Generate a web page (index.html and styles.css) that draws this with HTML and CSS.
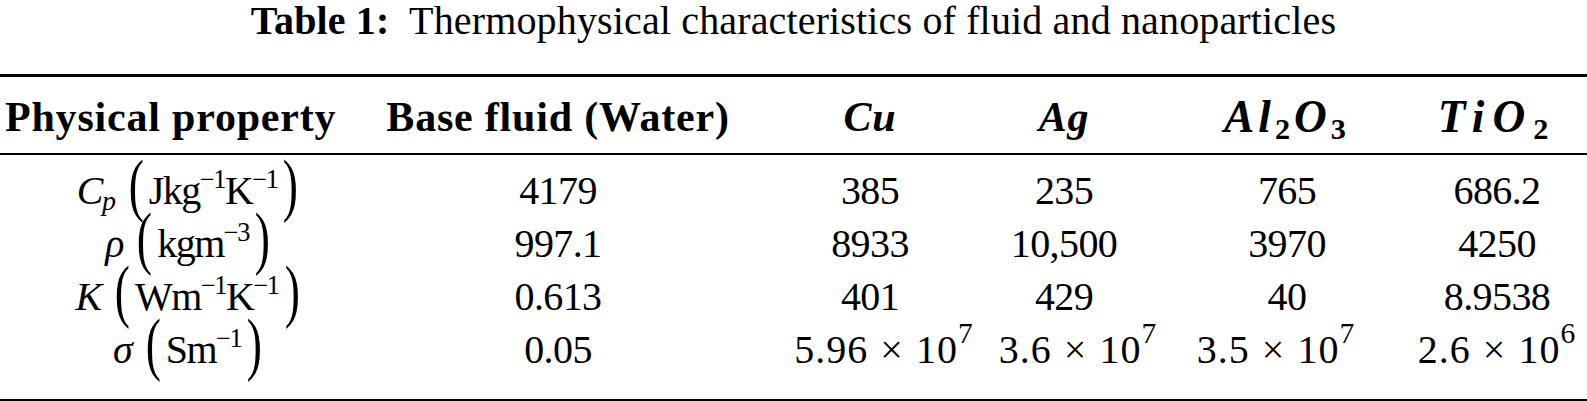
FILE: index.html
```html
<!DOCTYPE html>
<html>
  <head>
    <title>Table 1</title>
    <link rel="stylesheet" href="styles.css">
  </head>
  <body>
    <div class="page">
      <div class="caption">
        <b>Table 1:</b>&nbsp; Thermophysical characteristics of fluid and nanoparticles
      </div>

      <div class="table">
        <div class="row head">
          <div class="cell left">Physical property</div>
          <div class="cell">Base fluid (Water)</div>
          <div class="cell"><i>Cu</i></div>
          <div class="cell"><i>Ag</i></div>
          <div class="cell chem"><i>Al</i><sub>2</sub><i>O</i><sub>3</sub></div>
          <div class="cell chem wide"><i>TiO</i><sub>2</sub></div>
        </div>

        <div class="body">
          <div class="row">
            <div class="cell unit">
              <i>C</i><sub class="var">p</sub>
              <span class="paren">(</span>Jkg<sup>&minus;1</sup>K<sup>&minus;1</sup><span class="paren">)</span>
            </div>
            <div class="cell">4179</div>
            <div class="cell">385</div>
            <div class="cell">235</div>
            <div class="cell">765</div>
            <div class="cell">686.2</div>
          </div>
          <div class="row">
            <div class="cell unit">
              <i>&rho;</i>
              <span class="paren">(</span>kgm<sup>&minus;3</sup><span class="paren">)</span>
            </div>
            <div class="cell">997.1</div>
            <div class="cell">8933</div>
            <div class="cell">10,500</div>
            <div class="cell">3970</div>
            <div class="cell">4250</div>
          </div>
          <div class="row">
            <div class="cell unit">
              <i>K</i>
              <span class="paren">(</span>Wm<sup>&minus;1</sup>K<sup>&minus;1</sup><span class="paren">)</span>
            </div>
            <div class="cell">0.613</div>
            <div class="cell">401</div>
            <div class="cell">429</div>
            <div class="cell">40</div>
            <div class="cell">8.9538</div>
          </div>
          <div class="row">
            <div class="cell unit">
              <i>&sigma;</i>
              <span class="paren">(</span>Sm<sup>&minus;1</sup><span class="paren">)</span>
            </div>
            <div class="cell">0.05</div>
            <div class="cell sci">5.96<span class="times">&times;</span>10<sup class="exp">7</sup></div>
            <div class="cell sci">3.6<span class="times">&times;</span>10<sup class="exp">7</sup></div>
            <div class="cell sci">3.5<span class="times">&times;</span>10<sup class="exp">7</sup></div>
            <div class="cell sci">2.6<span class="times">&times;</span>10<sup class="exp">6</sup></div>
          </div>
        </div>
      </div>
    </div>
  </body>
</html>
```

FILE: styles.css
```css
body {
  margin: 0;
  background-color: #fff;
  color: #000;
  font-family: "Liberation Serif", "Times New Roman", serif;
}

.page {
  width: 1587px;
}

.caption {
  font-size: 40px;
  line-height: 42px;
  letter-spacing: 0.15px;
  text-align: center;
  margin-bottom: 32px;
}

.table {
  border-top: 3px solid #000;
  border-bottom: 3px solid #000;
}

/* tracks are set so each column's centre lands where the printed table has it */
.row {
  display: grid;
  grid-template-columns: 380px 356px 268px 120px 326px 94px;
  font-size: 40px;
  line-height: 53px;
  letter-spacing: -0.6px;
}

.cell {
  justify-self: center;
  white-space: nowrap;
}

.head {
  font-size: 42px;
  font-weight: bold;
  letter-spacing: 0.8px;
  padding: 14px 0 8px;
  border-bottom: 2px solid #000;
}

.head .left {
  justify-self: start;
  padding-left: 5px;
}

.head sub {
  font-size: 0.72em;
  vertical-align: -0.22em;
  line-height: 0;
}

.head .chem {
  letter-spacing: 4px;
}

.head .chem.wide {
  letter-spacing: 8px;
}

.head .chem i {
  font-size: 1.08em;
}

.body {
  padding: 9px 0 23px;
}

.unit {
  letter-spacing: -1.5px;
}

sup {
  font-size: 0.66em;
  vertical-align: 0.6em;
  line-height: 0;
}

sub.var {
  font-style: italic;
  font-size: 0.7em;
  vertical-align: -0.22em;
  line-height: 0;
}

.paren {
  display: inline-block;
  font-size: 1.75em;
  line-height: 0;
  transform: scaleX(0.65);
  vertical-align: -0.06em;
  margin: 0 2px;
}

.sci {
  letter-spacing: 1px;
}

/* the exponent rows sit a little off the column centre in the print */
.sci:nth-child(3),
.sci:nth-child(4) {
  margin-left: 28px;
}

.sci:nth-child(5) {
  margin-right: 22px;
}

.sci .exp {
  font-size: 0.74em;
  vertical-align: 0.66em;
}

.times {
  margin: 0 12px;
}
```
